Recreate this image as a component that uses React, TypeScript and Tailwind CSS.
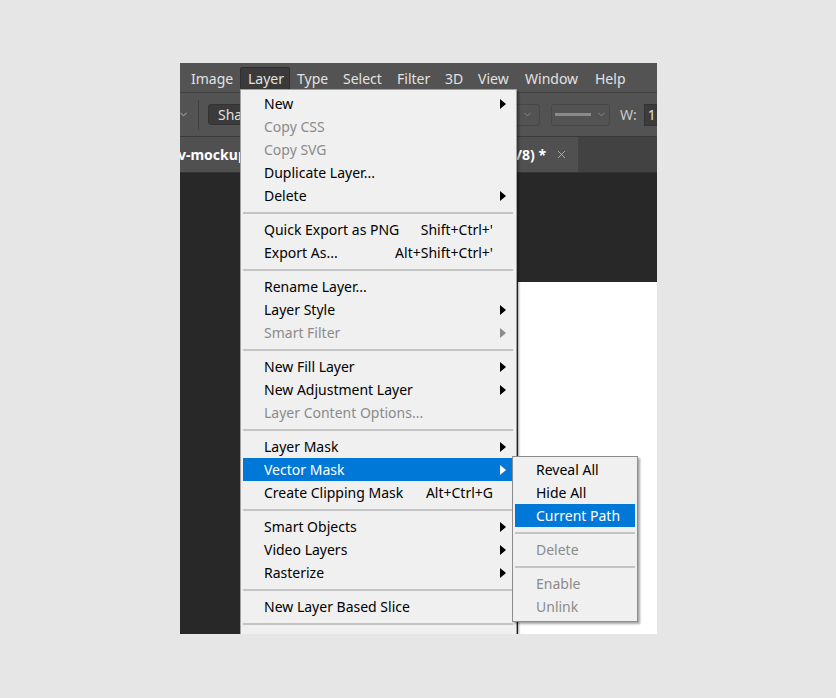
import { ChevronDown, X } from "lucide-react";

type Item =
  | { kind: "sep" }
  | {
      kind?: "item";
      label: string;
      shortcut?: string;
      sub?: boolean;
      disabled?: boolean;
      active?: boolean;
    };

const menuBar = [
  { label: "Image", w: "w-[56px]" },
  { label: "Layer", w: "w-[50px]", open: true },
  { label: "Type", w: "w-[46px]" },
  { label: "Select", w: "w-[54px]" },
  { label: "Filter", w: "w-[48px]" },
  { label: "3D", w: "w-[33px]" },
  { label: "View", w: "w-[47px]" },
  { label: "Window", w: "w-[70px]" },
  { label: "Help", w: "w-[50px]" },
];

const layerMenu: Item[] = [
  { label: "New", sub: true },
  { label: "Copy CSS", disabled: true },
  { label: "Copy SVG", disabled: true },
  { label: "Duplicate Layer..." },
  { label: "Delete", sub: true },
  { kind: "sep" },
  { label: "Quick Export as PNG", shortcut: "Shift+Ctrl+'" },
  { label: "Export As...", shortcut: "Alt+Shift+Ctrl+'" },
  { kind: "sep" },
  { label: "Rename Layer..." },
  { label: "Layer Style", sub: true },
  { label: "Smart Filter", sub: true, disabled: true },
  { kind: "sep" },
  { label: "New Fill Layer", sub: true },
  { label: "New Adjustment Layer", sub: true },
  { label: "Layer Content Options...", disabled: true },
  { kind: "sep" },
  { label: "Layer Mask", sub: true },
  { label: "Vector Mask", sub: true, active: true },
  { label: "Create Clipping Mask", shortcut: "Alt+Ctrl+G" },
  { kind: "sep" },
  { label: "Smart Objects", sub: true },
  { label: "Video Layers", sub: true },
  { label: "Rasterize", sub: true },
  { kind: "sep" },
  { label: "New Layer Based Slice" },
  { kind: "sep" },
];

const vectorMaskMenu: Item[] = [
  { label: "Reveal All" },
  { label: "Hide All" },
  { label: "Current Path", active: true },
  { kind: "sep" },
  { label: "Delete", disabled: true },
  { kind: "sep" },
  { label: "Enable", disabled: true },
  { label: "Unlink", disabled: true },
];

function Arrow({ color }: { color: string }) {
  return (
    <svg width="6" height="10" viewBox="0 0 6 10">
      <polygon points="0,0 6,5 0,10" fill={color} />
    </svg>
  );
}

function MenuList({ items, arrows }: { items: Item[]; arrows: boolean }) {
  return (
    <>
      {items.map((item, i) => {
        if (item.kind === "sep") {
          return (
            <div key={i} className="h-[11px] flex items-center">
              <div className="h-[2px] w-full bg-[#c4c4c4]" />
            </div>
          );
        }
        const color = item.active
          ? "text-white"
          : item.disabled
            ? "text-[#8b8b8b]"
            : "text-black";
        return (
          <div
            key={i}
            className={`flex items-center h-[23px] pl-[21px] ${color} ${
              item.active ? "bg-[#0078d7]" : ""
            }`}
          >
            <span className="flex-1 whitespace-nowrap">{item.label}</span>
            {item.shortcut && (
              <span className="whitespace-nowrap">{item.shortcut}</span>
            )}
            {arrows && (
              <span className="w-[20px] flex-none flex items-center pl-[7px]">
                {item.sub && (
                  <Arrow
                    color={
                      item.active ? "#ffffff" : item.disabled ? "#8b8b8b" : "#000000"
                    }
                  />
                )}
              </span>
            )}
          </div>
        );
      })}
    </>
  );
}

export default function App() {
  return (
    <div
      className="w-[836px] h-[698px] bg-[#e6e6e6] pt-[63px] pl-[180px]"
      style={{ fontFamily: '"Noto Sans", "Open Sans", sans-serif' }}
    >
      <div className="relative w-[477px] h-[571px] overflow-hidden flex flex-col bg-[#282828] text-[14px]">
        {/* menu bar */}
        <div className="h-[30px] flex-none flex items-center pl-[4px] pt-[1px] bg-[#535353] border-b border-[#424242] text-[#e2e2e2]">
          {menuBar.map((m) => (
            <div
              key={m.label}
              className={`${m.w} flex-none h-[23px] flex items-center pl-[7px] rounded-[2px] ${
                m.open ? "bg-[#3a3a3a] border border-[#2e2e2e] pl-[6px]" : ""
              }`}
            >
              {m.label}
            </div>
          ))}
        </div>

        {/* options bar */}
        <div className="h-[44px] flex-none flex items-center bg-[#535353] border-b border-[#3a3a3a]">
          <div className="w-[310px] flex-none flex items-center">
            <ChevronDown size={11} className="text-[#bdbdbd] -ml-[2px]" />
            <div className="w-px h-[30px] bg-[#404040] ml-[9px]" />
            <div className="ml-[9px] h-[21px] w-[70px] flex items-center pl-[9px] bg-[#3b3b3b] border border-[#333] rounded-[3px] text-[#e0e0e0]">
              Sha
            </div>
          </div>
          <div className="flex-none w-[50px] h-[22px] flex items-center justify-end border border-[#474747] rounded-[3px]">
            <div className="w-px h-[20px] bg-[#474747]" />
            <ChevronDown size={11} className="text-[#8a8a8a] mx-[6px]" />
          </div>
          <div className="ml-[11px] flex-none w-[59px] h-[22px] flex items-center border border-[#474747] rounded-[3px] pl-[3px]">
            <div className="w-[36px] h-[3px] bg-[#8a8a8a]" />
            <ChevronDown size={11} className="text-[#8a8a8a] ml-[5px]" />
          </div>
          <div className="ml-[6px] w-px h-[30px] bg-[#3e3e3e]" />
          <span className="ml-[4px] text-[#c9c9c9]">W:</span>
          <div className="ml-[7px] flex-none w-[50px] h-[22px] flex items-center pl-[3px] bg-[#3b3b3b] border border-[#333] text-[#e0e0e0]">
            1
          </div>
        </div>

        {/* tab bar */}
        <div className="h-[36px] flex-none flex bg-[#424242] border-b border-[#333]">
          <div className="w-[398px] flex-none flex items-center bg-[#505050] text-white font-bold overflow-hidden">
            <span className="flex-1 whitespace-nowrap -ml-[2px]">v-mockup</span>
            <span className="whitespace-nowrap">/8) *</span>
            <X size={13} strokeWidth={1.5} className="ml-[9px] mr-[10px] text-[#bcbcbc]" />
          </div>
        </div>

        {/* canvas area */}
        <div className="flex-1 pl-[338px] pt-[109px] flex">
          <div className="flex-1 bg-white" />
        </div>

        {/* Layer dropdown */}
        <div className="absolute left-[60px] top-[26px] w-[277px] h-[560px] bg-[#f0f0f0] border border-[#a0a0a0] shadow-[2px_2px_2px_rgba(0,0,0,0.35)] pt-[2px] pl-[2px] pr-[3px]">
          <MenuList items={layerMenu} arrows />

          {/* Vector Mask submenu */}
          <div className="absolute left-[271px] top-[366px] w-[126px] bg-[#f0f0f0] border border-[#8c8c8c] shadow-[2px_2px_2px_rgba(0,0,0,0.35)] pt-[1px] px-[2px] pb-[3px]">
            <MenuList items={vectorMaskMenu} arrows={false} />
          </div>
        </div>
      </div>
    </div>
  );
}
